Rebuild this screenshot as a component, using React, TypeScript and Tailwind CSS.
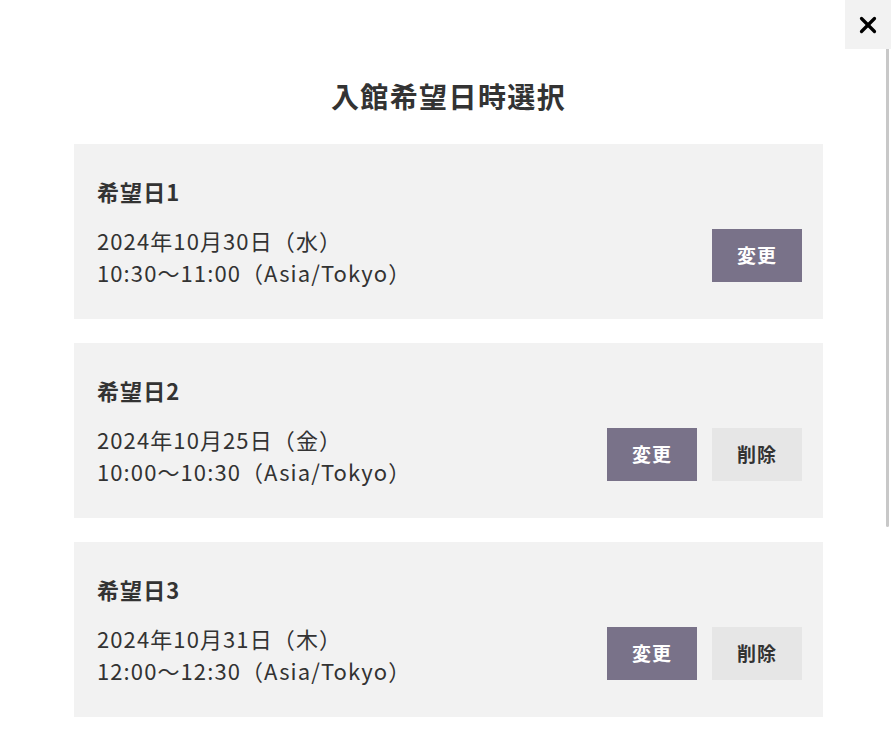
import { X } from "lucide-react";

type Slot = {
  label: string;
  date: string;
  time: string;
  removable: boolean;
};

const slots: Slot[] = [
  { label: "希望日1", date: "2024年10月30日（水）", time: "10:30〜11:00（Asia/Tokyo）", removable: false },
  { label: "希望日2", date: "2024年10月25日（金）", time: "10:00〜10:30（Asia/Tokyo）", removable: true },
  { label: "希望日3", date: "2024年10月31日（木）", time: "12:00〜12:30（Asia/Tokyo）", removable: true },
];

function SlotCard({ slot }: { slot: Slot }) {
  return (
    <div className="bg-[#f2f2f2] pl-[23px] pr-[21px] pt-[32px] pb-[31px]">
      <h3 className="text-[22px] font-bold leading-[30px] tracking-[0.05em] text-[#333]">{slot.label}</h3>
      <div className="mt-[18px] flex items-center justify-between">
        <div className="text-[22px] leading-[32px] tracking-[0.05em] text-[#333]">
          <p>{slot.date}</p>
          <p>{slot.time}</p>
        </div>
        <div className="mb-[2px] flex gap-[15px]">
          <button
            type="button"
            className="h-[53px] w-[90px] bg-[#797289] text-[19px] font-bold tracking-[0.05em] text-white"
          >
            変更
          </button>
          {slot.removable ? (
            <button
              type="button"
              className="h-[53px] w-[90px] bg-[#e6e6e6] text-[19px] font-bold tracking-[0.05em] text-[#333]"
            >
              削除
            </button>
          ) : null}
        </div>
      </div>
    </div>
  );
}

export default function App() {
  return (
    <div
      className="relative h-[735px] w-[891px] overflow-hidden bg-white"
      style={{ fontFamily: '"Noto Sans CJK JP", "Noto Sans", sans-serif' }}
    >
      <button
        type="button"
        aria-label="閉じる"
        className="absolute right-0 top-0 flex h-[49px] w-[46px] items-center justify-center bg-[#f2f2f2] text-black"
      >
        <X size={26} strokeWidth={3} />
      </button>
      <div className="absolute right-[2px] top-[49px] h-[478px] w-[3px] rounded-b bg-[#c8c8c8]" />

      <div className="w-[897px] pl-[74px] pt-[77px]">
        <h2 className="w-[749px] text-center text-[28px] font-bold leading-[38px] tracking-[0.05em] text-[#333]">入館希望日時選択</h2>
        <div className="mt-[29px] flex w-[749px] flex-col gap-[24px]">
          {slots.map((slot) => (
            <SlotCard key={slot.label} slot={slot} />
          ))}
        </div>
      </div>
    </div>
  );
}
